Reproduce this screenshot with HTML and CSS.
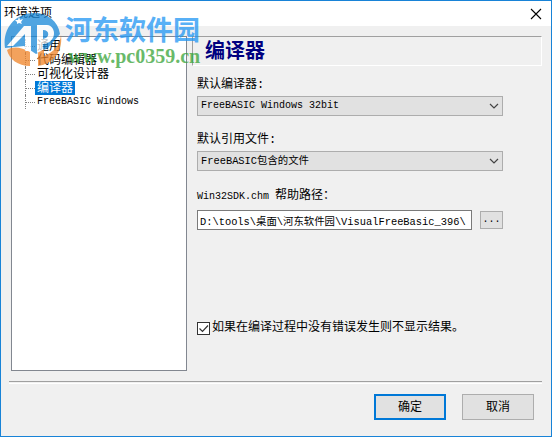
FILE: index.html
```
<!DOCTYPE html>
<html lang="zh-CN">
<head>
  <meta charset="UTF-8" />
  <meta name="viewport" content="width=device-width, initial-scale=1.0"/>
  <title>环境选项</title>
  <link rel="stylesheet" href="styles.css">
</head>
<body>
  <div class="window">
    <header class="titlebar">
      <span>环境选项</span>
      <button type="button" class="close" aria-label="关闭">
        <svg width="12" height="12" viewBox="0 0 12 12"><path d="M1 1L11 11M11 1L1 11" stroke="#000" stroke-width="1.1"/></svg>
      </button>
    </header>

    <form class="dialog">
      <div class="columns">
        <ul class="tree">
          <li><a href="#general">通用</a></li>
          <li><a href="#editor">代码编辑器</a></li>
          <li><a href="#designer">可视化设计器</a></li>
          <li><a href="#compiler" class="selected">编译器</a></li>
          <li><a href="#freebasic" class="latin">FreeBASIC Windows</a></li>
        </ul>

        <section class="page">
          <h1>编译器</h1>
          <div class="fields">
            <label for="compiler">默认编译器:</label>
            <div class="combo">
              <select id="compiler" class="latin"><option>FreeBASIC Windows 32bit</option></select>
              <svg class="arrow" width="10" height="6" viewBox="0 0 10 6"><path d="M1 1L5 5L9 1" fill="none" stroke="#444" stroke-width="1.2"/></svg>
            </div>

            <label for="include">默认引用文件:</label>
            <div class="combo">
              <select id="include" class="mixed"><option>FreeBASIC包含的文件</option></select>
              <svg class="arrow" width="10" height="6" viewBox="0 0 10 6"><path d="M1 1L5 5L9 1" fill="none" stroke="#444" stroke-width="1.2"/></svg>
            </div>

            <label for="help" class="path-label"><span class="latin">Win32SDK.chm </span>帮助路径：</label>
            <div class="path">
              <input type="text" id="help" class="mixed" value="D:\tools\桌面\河东软件园\VisualFreeBasic_396\">
              <button type="button" class="browse latin">...</button>
            </div>

            <label class="check"><input type="checkbox" checked>如果在编译过程中没有错误发生则不显示结果。</label>
          </div>
        </section>
      </div>

      <footer class="buttons">
        <button type="submit" class="primary">确定</button>
        <button type="button">取消</button>
      </footer>
    </form>

    <div class="watermark">
      <svg width="58" height="55" viewBox="0 0 58 55">
        <path d="M1 36C-2 16 12 1 30 1C44 1 54 9 56 22L44 36L32 42L20 34L1 36Z" fill="#1787d8"/>
        <path d="M3 38C9 34 17 35 26 40V54C14 54 5 47 3 38ZM57 23C59 40 49 52 34 54V40L40 37V44C50 40 56 33 57 23Z" fill="#f08328"/>
        <path d="M3 34L20 14H27V39H21V22L9 34ZM33 41V13H43C53 14 53 31 39 32V38ZM39 18V27C46 26 46 18 39 18Z" fill="#fff" fill-rule="evenodd"/>
        <path d="M15 5L16 8L19 7L17 10L18 12L15 11L13 12L13 10L11 8H14Z" fill="#fff"/>
      </svg>
      <div class="brand">
        <span class="name">河东软件园</span>
        <span class="site">www.pc0359.cn</span>
      </div>
    </div>
  </div>
</body>
</html>
```

FILE: styles.css
```
* {
  box-sizing: border-box;
}
body {
  margin: 0;
  font-family: "Liberation Mono", "Noto Sans CJK SC", monospace;
  font-size: 12px;
  line-height: 14px;
  color: #000;
}
button, input, select {
  font: inherit;
  color: inherit;
  margin: 0;
}
.latin {
  font-size: 10px;
}
.mixed {
  font-size: 12px;
  font-size-adjust: ch-width 0.52;
}
.window {
  position: relative;
  display: flex;
  flex-direction: column;
  min-height: 100vh;
  border: 1px solid #1883d7;
  background-color: #f0f0f0;
}
.titlebar {
  display: flex;
  justify-content: space-between;
  align-items: center;
  height: 25px;
  padding: 0 9px 0 3px;
  background-color: #fff;
}
.close {
  display: flex;
  padding: 0;
  border: none;
  background: none;
}
.dialog {
  flex: 1;
  display: flex;
  flex-direction: column;
  padding: 10px 9px 16px 8px;
}
.columns {
  flex: 1;
  display: flex;
  gap: 5px;
  padding: 0 0 10px 2px;
}
.tree {
  flex: 0 0 176px;
  margin: 0;
  padding: 2px 0 0 13px;
  list-style: none;
  border: 1px solid #828790;
  background-color: #fff;
}
.tree li {
  display: flex;
  align-items: center;
  height: 14px;
  border-left: 1px dotted #808080;
}
.tree li::before {
  content: "";
  width: 9px;
  border-top: 1px dotted #808080;
}
.tree a {
  height: 14px;
  padding: 0 2px;
  line-height: 16px;
  color: #000;
  text-decoration: none;
}
.tree .latin {
  line-height: 14px;
}
.tree .selected {
  background-color: #0078d7;
  color: #fff;
}
.page {
  flex: 1;
}
h1 {
  margin: 0;
  height: 30px;
  padding-left: 12px;
  border: 1px solid;
  border-color: #a0a0a0 #fff #fff #a0a0a0;
  font-size: 20px;
  line-height: 32px;
  color: #000080;
}
.fields {
  display: flex;
  flex-direction: column;
  padding: 10px 39px 0 5px;
}
.fields label {
  margin-bottom: 2px;
  line-height: 18px;
}
.combo {
  position: relative;
  margin-bottom: 15px;
}
.combo select {
  display: block;
  width: 100%;
  height: 20px;
  padding: 0 3px;
  border: 1px solid #adadad;
  border-radius: 0;
  background-color: #e1e1e1;
  appearance: none;
}
.arrow {
  position: absolute;
  right: 4px;
  top: 7px;
}
.fields .path-label {
  margin: 1px 0 4px;
}
.path {
  display: flex;
  align-items: center;
  gap: 8px;
}
.path input {
  flex: 1;
  min-width: 0;
  height: 20px;
  padding: 0 2px;
  border: 1px solid #7a7a7a;
  background-color: #fff;
}
.browse {
  width: 23px;
  height: 18px;
  padding: 0;
  border: 1px solid #adadad;
  background-color: #e1e1e1;
}
.fields .check {
  display: flex;
  align-items: center;
  gap: 2px;
  margin-top: 88px;
  line-height: 20px;
  white-space: nowrap;
}
.check input {
  flex: none;
  width: 13px;
  height: 13px;
  border: 1px solid #333;
  background: #fff url("data:image/svg+xml,%3Csvg xmlns='http://www.w3.org/2000/svg' viewBox='0 0 11 11'%3E%3Cpath d='M1.5 5.5L4.5 8.5L10 2.5' fill='none' stroke='%23333' stroke-width='1.2'/%3E%3C/svg%3E");
  appearance: none;
}
.buttons {
  display: flex;
  justify-content: flex-end;
  gap: 16px;
  padding: 12px 8px 0 0;
  border-top: 1px solid #a0a0a0;
  box-shadow: inset 0 1px #f0f0f0, inset 0 2px #fff;
}
.buttons button {
  width: 72px;
  height: 26px;
  padding: 2px 0 0;
  border: 1px solid #adadad;
  background-color: #e1e1e1;
}
.buttons .primary {
  border: 2px solid #0078d7;
}
/* site stamp over the top left corner */
.watermark {
  position: absolute;
  left: 3px;
  top: 11px;
  display: flex;
  gap: 3px;
  opacity: 0.75;
  pointer-events: none;
}
.brand {
  display: flex;
  flex-direction: column;
  padding-top: 7px;
  font-weight: bold;
}
.name {
  font-size: 27px;
  line-height: 28px;
  color: #2196f3;
}
.site {
  padding-left: 3px;
  font-family: "Liberation Serif", serif;
  font-size: 20px;
  line-height: 18px;
  color: #37a337;
}
```
